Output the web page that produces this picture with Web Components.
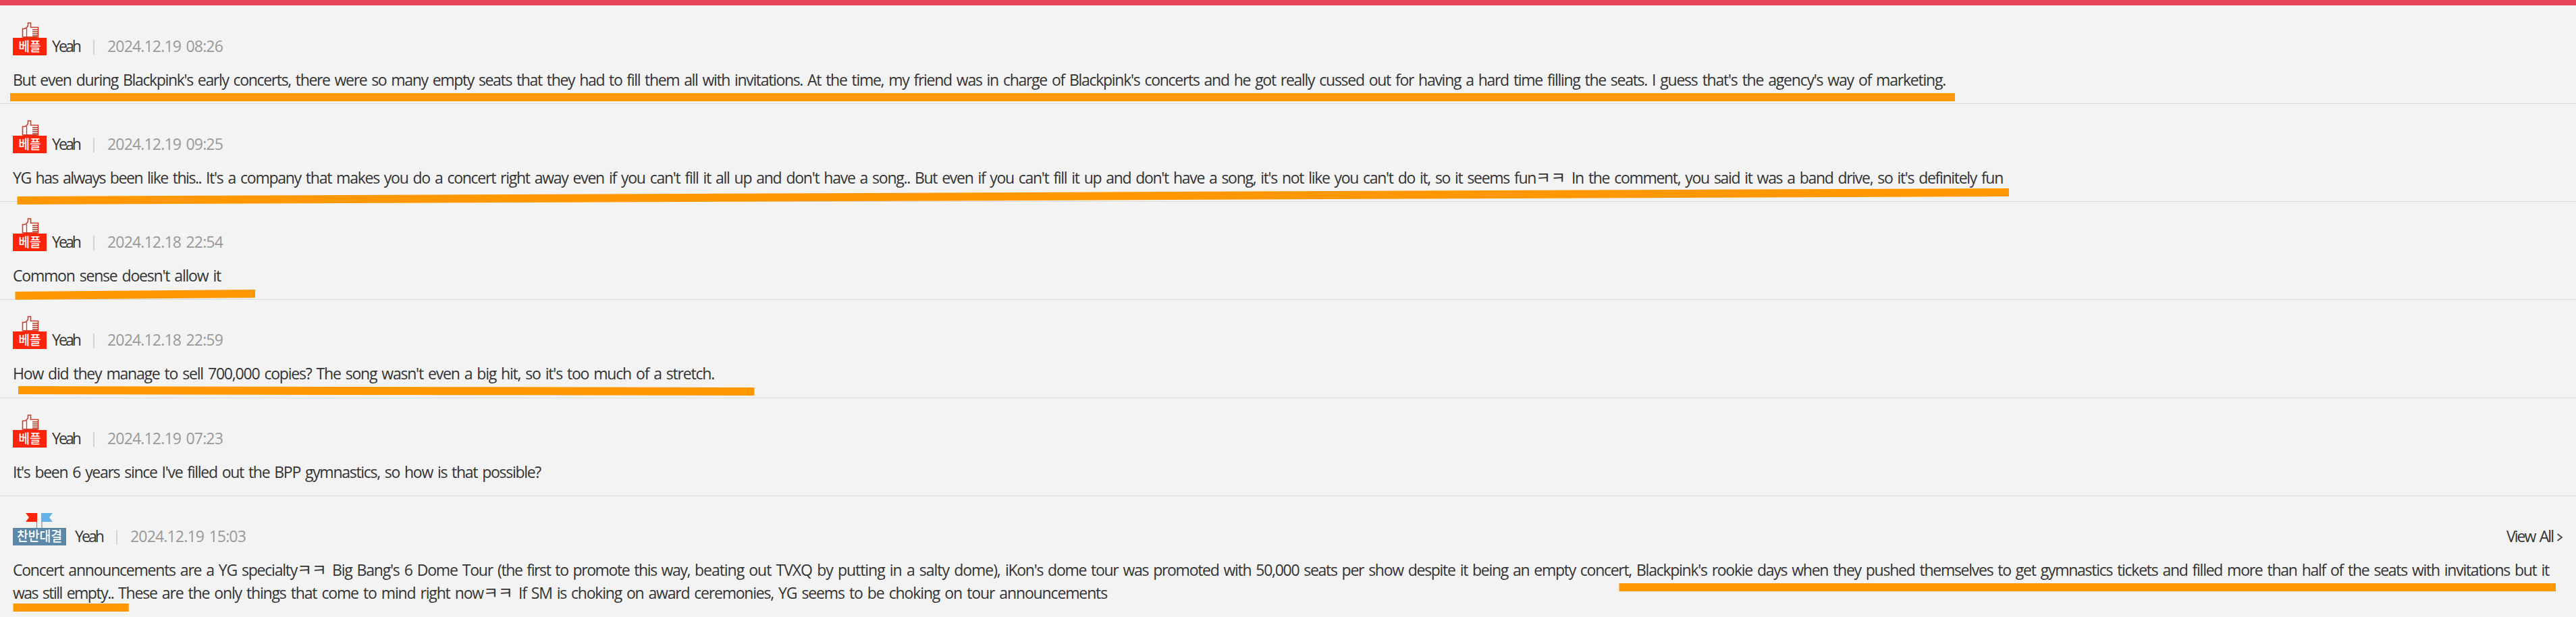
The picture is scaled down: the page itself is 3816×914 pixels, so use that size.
<!DOCTYPE html>
<html lang="en"><head><meta charset="utf-8"><title>Comments</title>
<style>html,body{margin:0;background:#f3f3f3}</style></head><body>
<comment-board></comment-board>
<script>
const FONT = '"Open Sans","Noto Sans CJK KR",sans-serif';

/* Text run, slightly condensed, whose tracking is adjusted to fill a given width */
class TextRun extends HTMLElement {
  connectedCallback() {
    const w = +this.getAttribute('w');
    const k = this.textContent.startsWith('ㅋ') ? 1 : 0.96;
    const r = this.attachShadow({mode: 'open'});
    r.innerHTML = `<style>:host{display:inline-block;white-space:pre;width:${w}px}span{display:inline-block;white-space:pre;word-spacing:2.400px;transform-origin:0 50%}</style><span><slot></slot></span>`;
    const s = r.querySelector('span');
    const natural = s.getBoundingClientRect().width;
    s.style.letterSpacing = ((w / k - natural) / this.textContent.length) + 'px';
    if (k !== 1) s.style.transform = `scaleX(${k})`;
  }
}
customElements.define('text-run', TextRun);

class BestBadge extends HTMLElement {
  connectedCallback() {
    this.attachShadow({mode: 'open'}).innerHTML = `<style>:host{display:block;width:50px;height:50px}svg{display:block}</style>
<svg width="50" height="50" viewBox="0 0 50 50">
<path d="M14.500 22V9.500H18L21 7.500L22.500 5V1H26.500V7.500H37.500V22Z" fill="#fff" stroke="#cf3a26" stroke-width="1.600"/>
<path d="M20.500 9V22" stroke="#cf3a26" stroke-width="1.400"/><path d="M29 11h8M29 14h8M29 17h8M29 20h8" stroke="#a83a2a" stroke-width="1.300"/>
<rect y="23" width="50" height="26" fill="#ff2408"/><rect x="16" y="21.500" width="20" height="2" fill="#e03018"/>
<text x="25" y="42.500" text-anchor="middle" textLength="33" lengthAdjust="spacingAndGlyphs" font-family="Noto Sans CJK KR,sans-serif" font-size="19" font-weight="500" fill="#fff">베플</text></svg>`;
  }
}
customElements.define('best-badge', BestBadge);

class DebateBadge extends HTMLElement {
  connectedCallback() {
    this.attachShadow({mode: 'open'}).innerHTML = `<style>:host{display:block;width:79px;height:50px}svg{display:block}</style>
<svg width="79" height="50" viewBox="0 0 79 50">
<path d="M35.500 1V23M43 1V23" stroke="#8c8c8c" stroke-width="1.200"/>
<path d="M19 1H36V14H19L24 7.500Z" fill="#ff2408"/><path d="M42 1H59L54 7.500L59 14H42Z" fill="#64b2e6"/>
<rect y="23" width="79" height="26" fill="#5b88a8"/>
<text x="39.500" y="42.500" text-anchor="middle" textLength="67" lengthAdjust="spacingAndGlyphs" font-family="Noto Sans CJK KR,sans-serif" font-size="20" font-weight="500" fill="#fff">찬반대결</text></svg>`;
  }
}
customElements.define('debate-badge', DebateBadge);

class CommentRow extends HTMLElement {
  connectedCallback() {
    const debate = this.getAttribute('kind') === 'debate';
    this.attachShadow({mode: 'open'}).innerHTML = `<style>
:host{display:block;box-sizing:border-box;height:145.150px;padding:23px 19px 0;border-bottom:1px solid #d9dadb;font:24px/34.700px ${FONT};color:#333}
:host([kind=debate]){border:0;height:180px}
header{display:flex;height:51px;align-items:flex-end}
best-badge,debate-badge{align-self:flex-start;margin-top:1px}
.name{margin-left:${debate ? 13 : 8}px;white-space:pre}
.name,.date,.all{line-height:34px;height:32px}
i{width:2px;height:22px;background:#d3d4d7;margin:0 0 2px 20px}
.date{margin-left:19px;color:#999}
.all{margin-left:auto;display:flex}
svg{margin:10px 0 0 5px}
main{margin-top:18px;white-space:nowrap}
.name,.date,.all{position:static}
</style><header>${debate ? '<debate-badge></debate-badge>' : '<best-badge></best-badge>'}<span class="name"><text-run w="41">Yeah</text-run></span><i></i><span class="date"><text-run w="171">${this.getAttribute('date')}</text-run></span>${debate ? '<span class="all"><text-run w="69">View All</text-run><svg width="10" height="18" viewBox="0 0 10 18"><path d="M1.500 4L8 9L1.500 14" fill="none" stroke="#444" stroke-width="1.800"/></svg></span>' : ''}</header><main><slot></slot></main>`;
  }
}
customElements.define('comment-row', CommentRow);

/* Orange highlighter strokes laid over the comments */
class MarkerLayer extends HTMLElement {
  connectedCallback() {
    this.attachShadow({mode: 'open'}).innerHTML = `<style>:host{position:absolute;inset:0;pointer-events:none}svg{display:block}</style>
<svg width="3816" height="914" fill="#ff9800">
<path d="M15 138H2896V150H15Z"/><path d="M25.500 291L2976 279V291L25.500 303Z"/><path d="M22.500 432L378 429V441L22.500 444Z"/>
<path d="M27 572L1117.500 574V586L27 584Z"/><path d="M2398.500 864H3786V876H2398.500Z"/><path d="M19.500 894H190.700V906H19.500Z"/></svg>`;
  }
}
customElements.define('marker-layer', MarkerLayer);

class CommentBoard extends HTMLElement {
  connectedCallback() {
    const run = (w, t) => `<text-run w="${w}">${t}</text-run>`;
    this.attachShadow({mode: 'open'}).innerHTML = `<style>:host{display:block;position:relative;box-sizing:border-box;height:914px;overflow:hidden;background:#f3f3f3;border-top:8px solid #e84459;padding-top:1px}marker-layer{top:-8px}.line{display:block}</style>
<comment-row date="2024.12.19 08:26">${run(163, "But even during ")}${run(1014, "Blackpink's early concerts, there were so many empty seats that they had to fill them all with invitations. ")}${run(1251, "At the time, my friend was in charge of Blackpink's concerts and he got really cussed out for having a hard time filling the seats. ")}${run(435, "I guess that's the agency's way of marketing.")}</comment-row>
<comment-row date="2024.12.19 09:25">${run(286, "YG has always been like this.. ")}${run(1050, "It's a company that makes you do a concert right away even if you can't fill it all up and don't have a song.. ")}${run(920, "But even if you can't fill it up and don't have a song, it's not like you can't do it, so it seems fun")}${run(53, "ㅋㅋ ")}${run(639, "In the comment, you said it was a band drive, so it's definitely fun")}</comment-row>
<comment-row date="2024.12.18 22:54">${run(308, "Common sense doesn't allow it")}</comment-row>
<comment-row date="2024.12.18 22:59">${run(1039, "How did they manage to sell 700,000 copies? The song wasn't even a big hit, so it's too much of a stretch.")}</comment-row>
<comment-row date="2024.12.19 07:23">${run(782, "It's been 6 years since I've filled out the BPP gymnastics, so how is that possible?")}</comment-row>
<comment-row kind="debate" date="2024.12.19 15:03"><span class="line">${run(421, "Concert announcements are a YG specialty")}${run(52, "ㅋㅋ ")}${run(245, "Big Bang's 6 Dome Tour ")}${run(292, "(the first to promote this way, ")}${run(460, "beating out TVXQ by putting in a salty dome), ")}${run(935, "iKon's dome tour was promoted with 50,000 seats per show despite it being an empty concert, ")}${run(1352, "Blackpink's rookie days when they pushed themselves to get gymnastics tickets and filled more than half of the seats with invitations but it")}</span><span class="line">${run(156, "was still empty.. ")}${run(541, "These are the only things that come to mind right now")}${run(52, "ㅋㅋ ")}${run(385, "If SM is choking on award ceremonies, ")}${run(487, "YG seems to be choking on tour announcements")}</span></comment-row>
<marker-layer></marker-layer>`;
  }
}
customElements.define('comment-board', CommentBoard);
</script></body></html>
